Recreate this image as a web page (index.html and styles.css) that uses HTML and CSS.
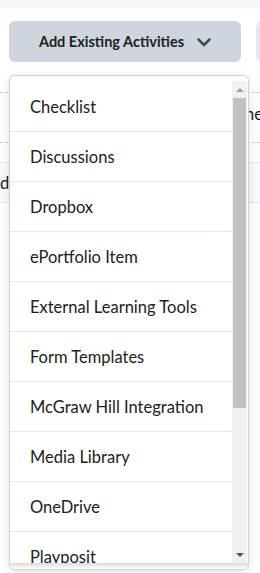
FILE: index.html
```html
<!DOCTYPE html>
<html>
<head>
    <link rel="stylesheet" href="styles.css">
</head>
<body>
    <div class="top_strip"></div>
    <div class="toolbar">
        <div class="btn btn_primary">
            <span>Add Existing Activities</span>
            <svg class="chevron" width="14" height="9" viewBox="0 0 14 9"><path d="M1.5 1.5 L7 7 L12.5 1.5" fill="none" stroke="#494c4e" stroke-width="2.6" stroke-linecap="round" stroke-linejoin="round"/></svg>
        </div>
        <div class="btn btn_secondary"></div>
    </div>
    <div class="content">
        <div class="row row_dashed"><span class="row_text_right">ne</span></div>
        <div class="row row_grey"><span class="row_text_left">d</span></div>
    </div>

    <div class="menu">
        <div class="menu_body">
            <div class="menu_list">
                <div class="menu_item">Checklist</div>
                <div class="menu_item">Discussions</div>
                <div class="menu_item">Dropbox</div>
                <div class="menu_item">ePortfolio Item</div>
                <div class="menu_item">External Learning Tools</div>
                <div class="menu_item">Form Templates</div>
                <div class="menu_item">McGraw Hill Integration</div>
                <div class="menu_item">Media Library</div>
                <div class="menu_item">OneDrive</div>
                <div class="menu_item">Playposit</div>
            </div>
            <div class="scrollbar">
                <div class="scroll_btn"><span class="arrow_up"></span></div>
                <div class="scroll_track"><div class="scroll_thumb"></div></div>
                <div class="scroll_btn"><span class="arrow_down"></span></div>
            </div>
        </div>
        <div class="menu_foot"></div>
    </div>
</body>
</html>
```
FILE: styles.css
```css
html, body {
    margin: 0;
    padding: 0;
    width: 100%;
    height: 100%;
    overflow: hidden;
}
body {
    font-family: Lato, "Noto Sans", sans-serif;
    color: #202122;
    background-color: white;
    position: relative;
}
.top_strip {
    height: 9px;
    background-color: #f6f8fb;
}
.toolbar {
    display: flex;
    gap: 15px;
    padding: 12px 0 0 9px;
}
.btn {
    height: 41px;
    border-radius: 6px;
    flex-shrink: 0;
}
.btn_primary {
    width: 232px;
    background-color: #cfd5dd;
    display: flex;
    align-items: center;
    justify-content: center;
    gap: 13px;
    font-size: 14.5px;
    font-weight: bold;
    padding-left: 0;
    box-sizing: border-box;
}
.chevron {
    margin-top: 1px;
}
.btn_secondary {
    width: 100px;
    background-color: #e6eaf0;
}
.content {
    margin-top: 30px;
}
.row {
    font-size: 16.5px;
    display: flex;
    align-items: center;
    white-space: nowrap;
    overflow: hidden;
}
.row_dashed {
    height: 49px;
    border-top: 1px dashed #c8ccd0;
    border-bottom: 1px dashed #c8ccd0;
}
.row_text_right {
    margin-left: 245px;
    margin-top: -8px;
}
.row_grey {
    margin-top: 19px;
    height: 39px;
    border-top: 1px solid #e3e9f1;
    border-bottom: 1px solid #e3e9f1;
    background-color: #f9fafc;
}
.row_text_left {
    margin-left: 0;
}

/* dropdown lies over the page */
.menu {
    position: absolute;
    left: 9px;
    top: 75px;
    width: 240px;
    height: 495px;
    box-sizing: border-box;
    border: 1px solid #cdd2d7;
    border-radius: 6px;
    background-color: white;
    box-shadow: 0 2px 10px rgba(0,0,0,0.12);
    padding-top: 5px;
    display: flex;
    flex-direction: column;
    overflow: hidden;
}
.menu_body {
    flex-grow: 1;
    display: flex;
    min-height: 0;
}
.menu_list {
    flex-grow: 1;
    overflow: hidden;
    padding-top: 1px;
}
.menu_item {
    height: 49px;
    border-bottom: 1px solid #e3e9f1;
    padding-left: 20px;
    font-size: 16.5px;
    display: flex;
    align-items: center;
}
.scrollbar {
    width: 15px;
    margin-right: 1px;
    background-color: #f1f1f1;
    display: flex;
    flex-direction: column;
}
.scroll_btn {
    height: 17px;
    display: flex;
    align-items: center;
    justify-content: center;
}
.arrow_up {
    width: 0;
    height: 0;
    border-left: 4px solid transparent;
    border-right: 4px solid transparent;
    border-bottom: 4px solid #a3a3a3;
}
.arrow_down {
    width: 0;
    height: 0;
    border-left: 4px solid transparent;
    border-right: 4px solid transparent;
    border-top: 4px solid #505050;
}
.scroll_track {
    flex-grow: 1;
}
.scroll_thumb {
    height: 310px;
    margin: 0 1px;
    background-color: #c1c1c1;
}
.menu_foot {
    height: 6px;
    flex-shrink: 0;
    background-image: linear-gradient(#dcdcdc, white);
}
```
